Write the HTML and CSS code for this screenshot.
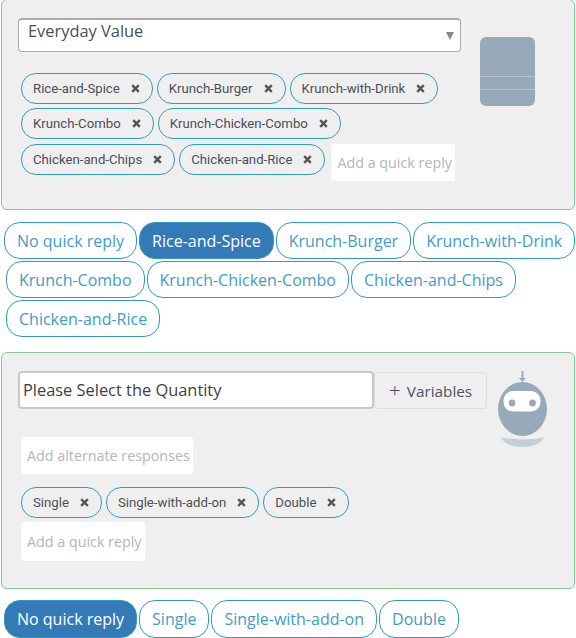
FILE: index.html
```html
<!DOCTYPE html>
<html lang="en">
<head>
<meta charset="utf-8">
<title>Quick replies</title>
<link rel="stylesheet" href="styles.css">
</head>
<body>
<svg class="defs" width="0" height="0" aria-hidden="true"><defs><symbol id="x" viewBox="0 0 9 9"><path d="M1.2 1.2 7.8 7.8M7.8 1.2 1.2 7.8" stroke="#555" stroke-width="2.4" fill="none"/></symbol></defs></svg>
<section class="panel panel-one">
  <div class="main">
    <div class="select"><span>Everyday Value</span><i class="caret"></i></div>
    <div class="chips chips-one">
      <div class="chip-row">
        <span class="chip">Rice-and-Spice<svg class="x"><use href="#x"/></svg></span>
        <span class="chip">Krunch-Burger<svg class="x"><use href="#x"/></svg></span>
        <span class="chip">Krunch-with-Drink<svg class="x"><use href="#x"/></svg></span>
      </div>
      <div class="chip-row">
        <span class="chip">Krunch-Combo<svg class="x"><use href="#x"/></svg></span>
        <span class="chip">Krunch-Chicken-Combo<svg class="x"><use href="#x"/></svg></span>
      </div>
      <div class="chip-row chip-row-last">
        <span class="chip">Chicken-and-Chips<svg class="x"><use href="#x"/></svg></span>
        <span class="chip">Chicken-and-Rice<svg class="x"><use href="#x"/></svg></span>
        <span class="ghost ghost-quick">Add a quick reply</span>
      </div>
    </div>
  </div>
  <div class="doc"><i></i><i></i></div>
</section>
<div class="replies replies-top">
  <div class="row row-first">
    <span class="pill">No quick reply</span><span class="pill on">Rice-and-Spice</span><span class="pill">Krunch-Burger</span><span class="pill">Krunch-with-Drink</span>
  </div>
  <div class="row">
    <span class="pill">Krunch-Combo</span><span class="pill">Krunch-Chicken-Combo</span><span class="pill">Chicken-and-Chips</span>
  </div>
  <div class="row">
    <span class="pill">Chicken-and-Rice</span>
  </div>
</div>
<section class="panel panel-two">
  <div class="main">
    <div class="msg"><div class="msg-input">Please Select the Quantity</div><div class="vars"><span class="plus">+</span><span>Variables</span></div></div>
    <div class="ghost ghost-alt">Add alternate responses</div>
    <div class="chips chips-two">
      <div class="chip-row">
        <span class="chip">Single<svg class="x"><use href="#x"/></svg></span>
        <span class="chip">Single-with-add-on<svg class="x"><use href="#x"/></svg></span>
        <span class="chip">Double<svg class="x"><use href="#x"/></svg></span>
      </div>
      <div class="chip-row">
        <span class="ghost ghost-quick2">Add a quick reply</span>
      </div>
    </div>
  </div>
  <svg class="bot" width="50" height="77" viewBox="0 0 50 77" aria-hidden="true">
    <path d="M24.500 0v9" stroke="#98a9b9" stroke-width="2"/>
    <path d="M21 7h7l-3.500 4z" fill="#98a9b9"/>
    <ellipse cx="24.500" cy="38" rx="24.500" ry="27" fill="#98a9b9"/>
    <rect x="5.500" y="20" width="37" height="20.500" rx="9.500" fill="#fff"/>
    <circle cx="14" cy="32" r="3.400" fill="#98a9b9"/>
    <circle cx="34.500" cy="32" r="3.400" fill="#98a9b9"/>
    <path d="M3 66.500c13 2.500 30 2.500 43 0-2 6-12 9.500-21.500 9.500S5 72.500 3 66.500z" fill="#c5ced6"/>
  </svg>
</section>
<div class="replies replies-bottom">
  <div class="row row-first">
    <span class="pill tall on">No quick reply</span><span class="pill tall">Single</span><span class="pill tall">Single-with-add-on</span><span class="pill tall">Double</span>
  </div>
</div>
</body>
</html>
```
FILE: styles.css
```css
* { box-sizing: border-box; }
html, body { margin: 0; padding: 0; }
body {
  width: 576px;
  height: 638px;
  overflow: hidden;
  background: #fff;
  font-family: "Open Sans", sans-serif;
  color: #3f3f46;
}
.defs { position: absolute; }
.panel {
  display: flex;
  margin: 0 1px;
  background: #efefef;
  border: 1px solid #86c993;
  border-radius: 6px;
}
.panel-one {
  height: 211px;
  margin-top: -1px;
  padding: 18px 0 0 16px;
}
.panel-two {
  height: 237px;
  margin-top: 13px;
  padding: 18px 0 0 16px;
}
.main { display: flex; flex-direction: column; }
.panel-one .main { width: 443px; }
.select {
  position: relative;
  height: 34px;
  padding: 0 0 0 9px;
  background: #fff;
  border: 1px solid #ababab;
  border-top-width: 2px;
  border-radius: 4px;
  font-size: 16.400px;
  line-height: 22px;
  color: #48505a;
}
.caret {
  position: absolute;
  right: 6px;
  top: 12px;
  width: 0;
  height: 0;
  border-left: 4.500px solid transparent;
  border-right: 4.500px solid transparent;
  border-top: 8px solid #8a8a8a;
}
.chips { display: flex; flex-direction: column; gap: 4px; padding-left: 3px; }
.chips-one { margin-top: 21px; }
.chips-two { margin-top: 13px; }
.chip-row { display: flex; align-items: flex-start; gap: 4px; }
.chip-row-last { margin-top: 1px; }
.chip {
  display: inline-flex;
  align-items: center;
  height: 31px;
  padding: 0 12px 0 11px;
  border: 1px solid #2e9cbc;
  border-radius: 15px;
  font-family: Roboto, sans-serif;
  font-size: 13.200px;
  color: #4a4f57;
  white-space: nowrap;
}
.x { width: 9px; height: 9px; margin-left: 11px; }
.ghost {
  display: inline-flex;
  align-items: center;
  background: #fff;
  border-radius: 3px;
  padding: 0 3px 0 6px;
  font-size: 14.300px;
  color: #b5b5b5;
  white-space: nowrap;
}
.ghost-quick { height: 37px; margin-left: 2px; }
.ghost-alt { height: 37px; margin: 28px 0 0 3px; align-self: flex-start; }
.ghost-quick2 { height: 39px; }
.doc {
  width: 55px;
  height: 69px;
  margin: 19px 0 0 19px;
  background: #98a9b9;
  border-radius: 6px;
  padding-top: 39px;
}
.doc i { display: block; height: 1px; background: #b9c4cf; margin-bottom: 12px; }
.replies { display: flex; flex-direction: column; }
.replies-top { margin-top: 12px; }
.replies-bottom { margin-top: 11px; }
.row { display: flex; gap: 2px; padding-left: 6px; margin-bottom: 2px; }
.row-first { padding-left: 4px; }
.pill {
  display: inline-flex;
  align-items: center;
  height: 37px;
  padding: 0 12px;
  background: #fff;
  border: 1px solid #2e9cbc;
  border-radius: 16px;
  font-size: 16px;
  color: #3f9dc4;
  white-space: nowrap;
}
.pill.tall { height: 38px; }
.pill.on { background: #337ab7; color: #fff; }
.msg { display: flex; width: 469px; }
.msg-input {
  width: 356px;
  height: 38px;
  padding: 0 0 0 3px;
  background: #fff;
  border: 2px solid #c9c9c9;
  border-radius: 4px;
  font-size: 16.400px;
  line-height: 34px;
  color: #3d3f45;
}
.vars {
  display: flex;
  align-items: center;
  justify-content: center;
  gap: 6px;
  width: 113px;
  height: 37px;
  margin-top: 1px;
  border: 1px solid #dedede;
  border-radius: 4px;
  font-size: 15.300px;
  color: #4c5260;
  white-space: nowrap;
}
.plus { color: #3d4a7a; font-size: 21px; font-weight: 300; line-height: 1; }
.bot { margin: 0 0 0 11px; }
```
